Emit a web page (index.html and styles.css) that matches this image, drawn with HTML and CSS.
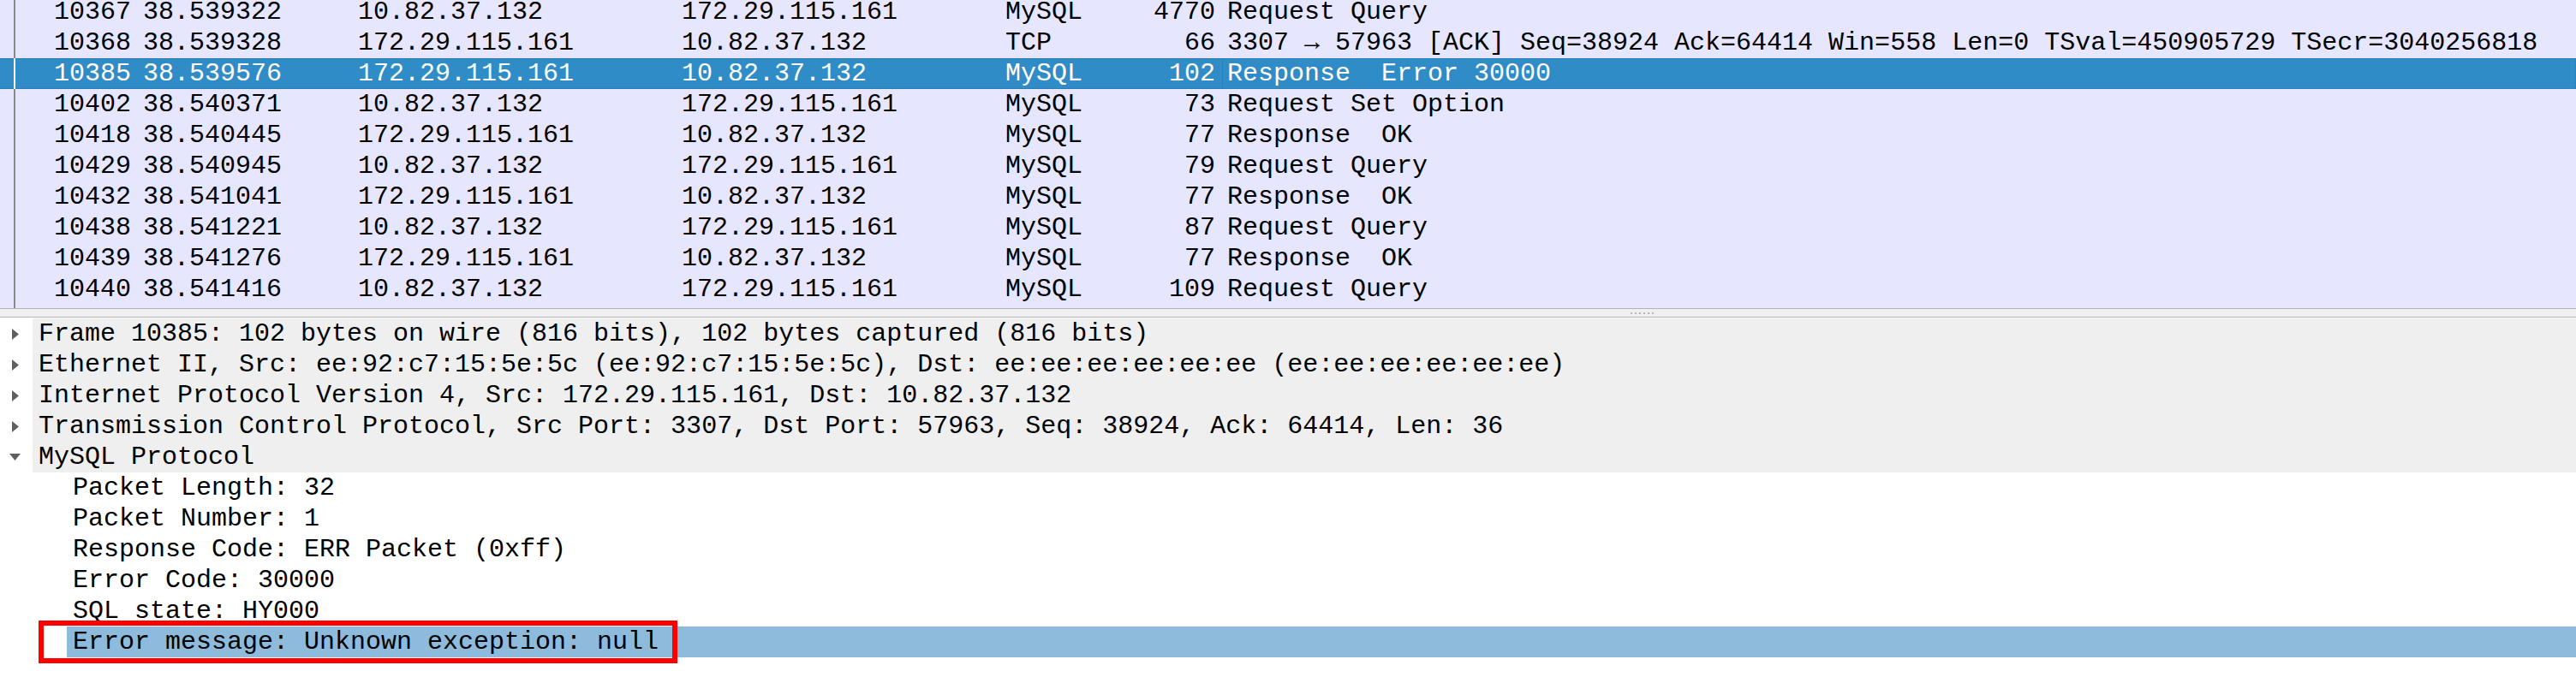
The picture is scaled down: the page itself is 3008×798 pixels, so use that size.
FILE: index.html
```html
<!DOCTYPE html>
<html>
<head>
<meta charset="utf-8">
<link rel="stylesheet" href="styles.css">
</head>
<body>
<div class="packet-list">
  <div class="rows">
    <div class="prow"><span></span><span class="ind"></span><span class="c num">10367</span><span class="c">38.539322</span><span class="c">10.82.37.132</span><span class="c">172.29.115.161</span><span class="c">MySQL</span><span class="c num">4770</span><span class="c info">Request Query</span></div>
    <div class="prow"><span></span><span class="ind"></span><span class="c num">10368</span><span class="c">38.539328</span><span class="c">172.29.115.161</span><span class="c">10.82.37.132</span><span class="c">TCP</span><span class="c num">66</span><span class="c info">3307 → 57963 [ACK] Seq=38924 Ack=64414 Win=558 Len=0 TSval=450905729 TSecr=3040256818</span></div>
    <div class="prow sel"><span></span><span class="ind"></span><span class="c num">10385</span><span class="c">38.539576</span><span class="c">172.29.115.161</span><span class="c">10.82.37.132</span><span class="c">MySQL</span><span class="c num">102</span><span class="c info focus">Response  Error 30000</span></div>
    <div class="prow"><span></span><span class="ind"></span><span class="c num">10402</span><span class="c">38.540371</span><span class="c">10.82.37.132</span><span class="c">172.29.115.161</span><span class="c">MySQL</span><span class="c num">73</span><span class="c info">Request Set Option</span></div>
    <div class="prow"><span></span><span class="ind"></span><span class="c num">10418</span><span class="c">38.540445</span><span class="c">172.29.115.161</span><span class="c">10.82.37.132</span><span class="c">MySQL</span><span class="c num">77</span><span class="c info">Response  OK</span></div>
    <div class="prow"><span></span><span class="ind"></span><span class="c num">10429</span><span class="c">38.540945</span><span class="c">10.82.37.132</span><span class="c">172.29.115.161</span><span class="c">MySQL</span><span class="c num">79</span><span class="c info">Request Query</span></div>
    <div class="prow"><span></span><span class="ind"></span><span class="c num">10432</span><span class="c">38.541041</span><span class="c">172.29.115.161</span><span class="c">10.82.37.132</span><span class="c">MySQL</span><span class="c num">77</span><span class="c info">Response  OK</span></div>
    <div class="prow"><span></span><span class="ind"></span><span class="c num">10438</span><span class="c">38.541221</span><span class="c">10.82.37.132</span><span class="c">172.29.115.161</span><span class="c">MySQL</span><span class="c num">87</span><span class="c info">Request Query</span></div>
    <div class="prow"><span></span><span class="ind"></span><span class="c num">10439</span><span class="c">38.541276</span><span class="c">172.29.115.161</span><span class="c">10.82.37.132</span><span class="c">MySQL</span><span class="c num">77</span><span class="c info">Response  OK</span></div>
    <div class="prow"><span></span><span class="ind"></span><span class="c num">10440</span><span class="c">38.541416</span><span class="c">10.82.37.132</span><span class="c">172.29.115.161</span><span class="c">MySQL</span><span class="c num">109</span><span class="c info">Request Query</span></div>
  </div>
</div>
<div class="splitter"><span class="grip"></span></div>
<div class="details">
  <div class="drow top"><span class="tw"><svg width="38" height="36" viewBox="0 0 38 36"><polygon points="14,12 22,18.5 14,25" fill="#5f5f5f"/></svg></span><span class="dt">Frame 10385: 102 bytes on wire (816 bits), 102 bytes captured (816 bits)</span></div>
  <div class="drow top"><span class="tw"><svg width="38" height="36" viewBox="0 0 38 36"><polygon points="14,12 22,18.5 14,25" fill="#5f5f5f"/></svg></span><span class="dt">Ethernet II, Src: ee:92:c7:15:5e:5c (ee:92:c7:15:5e:5c), Dst: ee:ee:ee:ee:ee:ee (ee:ee:ee:ee:ee:ee)</span></div>
  <div class="drow top"><span class="tw"><svg width="38" height="36" viewBox="0 0 38 36"><polygon points="14,12 22,18.5 14,25" fill="#5f5f5f"/></svg></span><span class="dt">Internet Protocol Version 4, Src: 172.29.115.161, Dst: 10.82.37.132</span></div>
  <div class="drow top"><span class="tw"><svg width="38" height="36" viewBox="0 0 38 36"><polygon points="14,12 22,18.5 14,25" fill="#5f5f5f"/></svg></span><span class="dt">Transmission Control Protocol, Src Port: 3307, Dst Port: 57963, Seq: 38924, Ack: 64414, Len: 36</span></div>
  <div class="drow top"><span class="tw"><svg width="38" height="36" viewBox="0 0 38 36"><polygon points="11,14 24,14 17.5,22" fill="#5f5f5f"/></svg></span><span class="dt">MySQL Protocol</span></div>
  <div class="drow child"><span class="tw2"></span><span class="dt">Packet Length: 32</span></div>
  <div class="drow child"><span class="tw2"></span><span class="dt">Packet Number: 1</span></div>
  <div class="drow child"><span class="tw2"></span><span class="dt">Response Code: ERR Packet (0xff)</span></div>
  <div class="drow child"><span class="tw2"></span><span class="dt">Error Code: 30000</span></div>
  <div class="drow child"><span class="tw2"></span><span class="dt">SQL state: HY000</span></div>
  <div class="drow child dsel"><span class="tw2"></span><span class="dt">Error message: Unknown exception: null</span><span class="mark"></span></div>
</div>
</body>
</html>
```
FILE: styles.css
```css
html, body {
  margin: 0;
  padding: 0;
  background: #ffffff;
}
body {
  font-family: "Liberation Mono", "DejaVu Sans Mono", monospace;
  font-size: 30px;
  line-height: 36px;
  color: #000000;
  width: 3008px;
  height: 798px;
  overflow: hidden;
}
.packet-list {
  height: 360px;
  overflow: hidden;
  background: #e6e6fe linear-gradient(#8a8a8a, #8a8a8a) 16px 0 / 2px 100% no-repeat;
  border-bottom: 1px solid #b3b3b3;
}
.rows {
  margin-top: -4px;
}
.prow {
  display: grid;
  grid-template-columns: 16px 2px 142px 251px 378px 378px 133px 126px 1fr;
  height: 36px;
  white-space: pre;
}
.c {
  padding: 0 7px;
  overflow: hidden;
}
.num {
  text-align: right;
}
.prow.sel {
  background: #308cc6;
  color: #ffffff;
  box-shadow: inset 0 1px 0 #2a7db3, inset 0 -1px 0 #2a7db3;
}
.prow.sel .ind {
  background: #ffffff;
}
.focus {
  box-shadow: inset 0 0 0 1px #2b80ba;
  padding-left: 6px;
  margin-left: 1px;
}
.splitter {
  height: 9px;
  background: #efefef;
  border-bottom: 1px solid #b3b3b3;
  display: flex;
  align-items: center;
  padding-left: 1904px;
}
.grip {
  width: 30px;
  height: 2px;
  background: repeating-linear-gradient(90deg, #b8b8b8 0 2px, transparent 2px 5px);
}
.details {
  padding-top: 1px;
}
.drow {
  display: flex;
  height: 36px;
  white-space: pre;
}
.tw {
  width: 38px;
  flex: none;
  background: #ffffff;
}
.tw svg {
  display: block;
}
.tw2 {
  width: 78px;
  flex: none;
}
.dt {
  padding-left: 7px;
  flex: 1;
}
.drow.top .dt {
  background: #efefef;
}
.drow.dsel {
  position: relative;
}
.drow.dsel .dt {
  background: #8ebbdb;
}
.mark {
  position: absolute;
  left: 45px;
  top: -7px;
  width: 734px;
  height: 38px;
  border: 6px solid #ff0000;
}
```
